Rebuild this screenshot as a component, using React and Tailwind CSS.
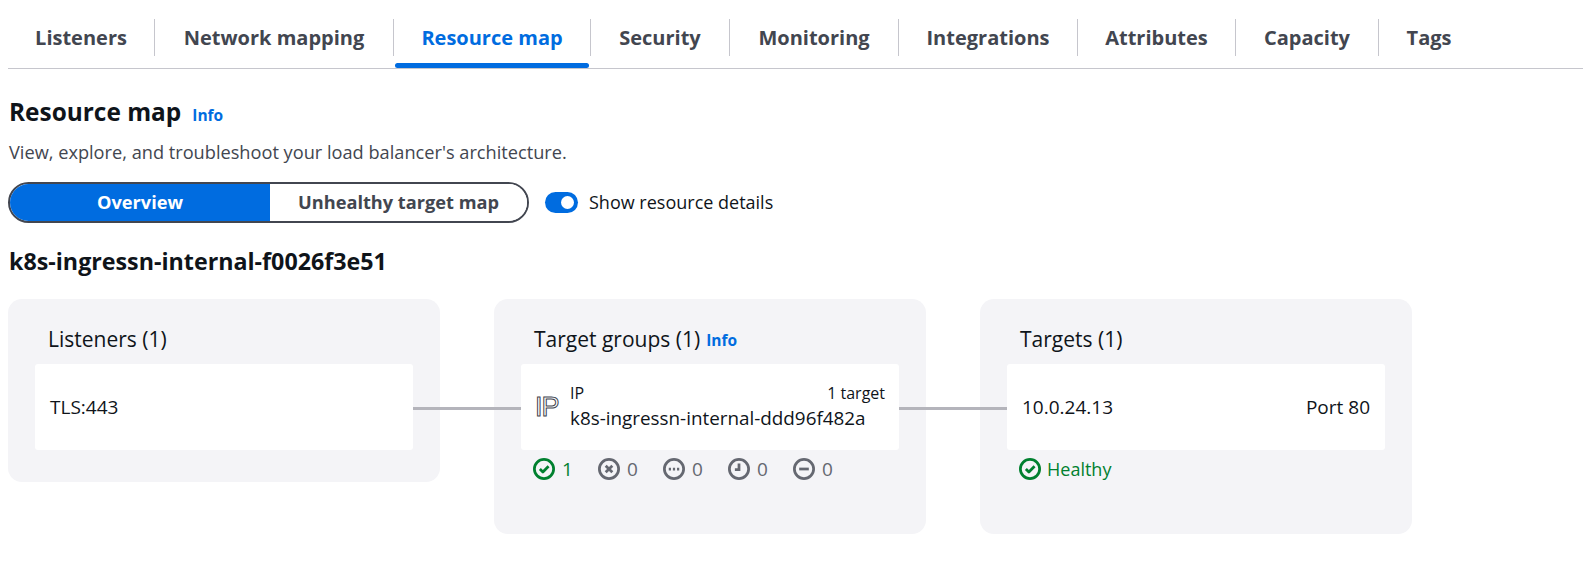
const tabs = [
  { label: "Listeners", width: "w-[147px]" },
  { label: "Network mapping", width: "w-[239px]" },
  { label: "Resource map", width: "w-[197px]", active: true },
  { label: "Security", width: "w-[139px]" },
  { label: "Monitoring", width: "w-[169px]" },
  { label: "Integrations", width: "w-[179px]" },
  { label: "Attributes", width: "w-[158px]" },
  { label: "Capacity", width: "w-[143px]" },
  { label: "Tags", width: "w-[100px]", last: true },
];

const StatusIcon = ({ type, className }) => (
  <svg viewBox="0 0 16 16" fill="none" stroke="currentColor" strokeWidth="2" className={className}>
    <circle cx="8" cy="8" r="7" />
    {type === "ok" && <path d="M5 8l2.2 2.2L11.3 6" strokeLinejoin="round" />}
    {type === "error" && <path d="M5.6 5.6l4.8 4.8M10.4 5.6l-4.8 4.8" />}
    {type === "dots" && <path d="M4.2 8h1.6M7.2 8h1.6M10.2 8h1.6" />}
    {type === "clock" && <path d="M8 4v4.5H5" />}
    {type === "minus" && <path d="M4.5 8h7" />}
  </svg>
);

const Count = ({ type, value, green }) => (
  <div className="flex items-center gap-[7px] w-[65px]">
    <StatusIcon type={type} className={`w-[22px] h-[22px] shrink-0 ${green ? "text-[#00802f]" : "text-[#656871]"}`} />
    <span className={`text-[19px] ${green ? "text-[#00802f]" : "text-[#656871]"}`}>{value}</span>
  </div>
);

const Card = ({ title, info, height, children }) => (
  <div className={`w-[432px] rounded-[14px] bg-[#f4f4f7] px-[27px] ${height}`}>
    <div className="flex items-center h-[65px] pl-[13px] pt-[17px] text-[#0f141a]">
      <span className="text-[21px]">{title}</span>
      {info && <a className="ml-[6px] text-[15.5px] font-bold text-[#006ce0] pt-[2px]">Info</a>}
    </div>
    {children}
  </div>
);

const Connector = () => (
  <div className="relative z-10 w-[108px] -mx-[27px] mt-[108px] h-[3px] bg-[#b4b4bb]" />
);

const App = () => {
  return (
    <div className="w-[1591px] h-[564px] bg-white overflow-hidden font-['Open_Sans',sans-serif] text-[18px]">
      <div className="mx-2 h-[69px] pt-[19px] border-b border-[#c6c6cd] flex items-start">
        {tabs.map((tab) => (
          <div
            key={tab.label}
            className={`relative h-[37px] flex items-center justify-center font-bold text-[20px] shrink-0 ${tab.width} ${
              tab.last ? "" : "border-r border-[#c6c6cd]"
            } ${tab.active ? "text-[#006ce0]" : "text-[#424650]"}`}
          >
            {tab.label}
            {tab.active && (
              <div className="absolute left-[1px] right-[1px] top-[44px] h-[5px] rounded-[3px] bg-[#006ce0]" />
            )}
          </div>
        ))}
      </div>

      <div className="px-2">
        <div className="flex items-center mt-[27px] h-[32px]">
          <h1 className="pl-[1px] text-[24.4px] font-bold text-[#0f141a]">Resource map</h1>
          <a className="ml-[11px] text-[15.5px] font-bold text-[#006ce0] pt-[8px]">Info</a>
        </div>
        <p className="mt-[11px] pl-[1px] h-[24px] text-[18.2px] text-[#424650]">
          View, explore, and troubleshoot your load balancer's architecture.
        </p>

        <div className="flex items-center mt-[19px]">
          <div className="flex w-[521px] h-[41px] rounded-full border-2 border-[#424650] overflow-hidden font-bold text-[18.2px]">
            <div className="w-[260px] flex items-center justify-center bg-[#006ce0] text-white">Overview</div>
            <div className="flex-1 flex items-center justify-center bg-white text-[#424650]">Unhealthy target map</div>
          </div>
          <div className="ml-4 w-[33px] h-[21px] rounded-full bg-[#006ce0] flex items-center justify-end pr-[4px]">
            <div className="w-[13px] h-[13px] rounded-full bg-white" />
          </div>
          <span className="ml-[11px] text-[#0f141a]">Show resource details</span>
        </div>

        <h2 className="mt-[21px] pl-[1px] h-[32px] text-[23.25px] font-bold text-[#0f141a]">k8s-ingressn-internal-f0026f3e51</h2>

        <div className="flex items-start mt-[23px] gap-0">
          <Card title="Listeners (1)" height="h-[183px]">
            <div className="h-[86px] rounded-[3px] bg-white flex items-center px-[15px] text-[19px] text-[#0f141a]">TLS:443</div>
          </Card>
          <Connector />
          <Card title="Target groups (1)" info height="h-[235px]">
            <div className="h-[86px] rounded-[3px] bg-white flex items-center pl-[14px] pr-[14px] text-[#0f141a]">
              <span className="w-[35px] shrink-0 font-['Liberation_Sans',sans-serif] text-[27px] leading-none tracking-[-1px] text-white [-webkit-text-stroke:1px_#424650]">
                IP
              </span>
              <div className="flex-1">
                <div className="flex justify-between text-[16px] leading-[20px]">
                  <span>IP</span>
                  <span>1 target</span>
                </div>
                <div className="text-[18.85px] leading-[26px] mt-[2px]">k8s-ingressn-internal-ddd96f482a</div>
              </div>
            </div>
            <div className="flex items-center mt-[8px] pl-[12px] h-[22px]">
              <Count type="ok" value="1" green />
              <Count type="error" value="0" />
              <Count type="dots" value="0" />
              <Count type="clock" value="0" />
              <Count type="minus" value="0" />
            </div>
          </Card>
          <Connector />
          <Card title="Targets (1)" height="h-[235px]">
            <div className="h-[86px] rounded-[3px] bg-white flex items-center justify-between px-[15px] text-[19px] text-[#0f141a]">
              <span>10.0.24.13</span>
              <span>Port 80</span>
            </div>
            <div className="flex items-center gap-[6px] mt-[8px] pl-[12px] h-[22px] text-[#00802f]">
              <StatusIcon type="ok" className="w-[22px] h-[22px]" />
              <span>Healthy</span>
            </div>
          </Card>
        </div>
      </div>
    </div>
  );
};

export default App;
